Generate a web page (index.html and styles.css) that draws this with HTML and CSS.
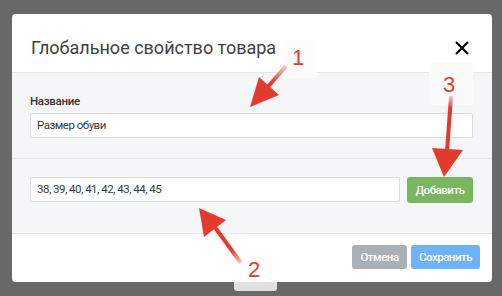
FILE: index.html
```html
<!DOCTYPE html>
<html lang="ru">
<head>
    <meta charset="UTF-8">
    <title>Глобальное свойство товара</title>
    <link rel="stylesheet" href="styles.css">
</head>
<body>

    <div class="modal">
        <div class="modal-header">
            <h2>Глобальное свойство товара</h2>
            <span class="close">
                <svg width="14" height="14" viewBox="0 0 14 14">
                    <path d="M1 1 L13 13 M13 1 L1 13" stroke="#000" stroke-width="2.2"/>
                </svg>
            </span>
        </div>

        <div class="section">
            <label class="label">Название</label>
            <div class="input">Размер обуви</div>
        </div>

        <div class="section section-values">
            <div class="row">
                <div class="input input-grow">38, 39, 40, 41, 42, 43, 44, 45</div>
                <button class="btn btn-green">Добавить</button>
            </div>
        </div>

        <div class="modal-footer">
            <button class="btn btn-gray">Отмена</button>
            <button class="btn btn-blue">Сохранить</button>
        </div>
    </div>

    <div class="tab"></div>

    <!-- annotations on top of the screenshot -->
    <svg class="notes" width="502" height="296" viewBox="0 0 502 296">
        <defs>
            <linearGradient id="tail1" gradientUnits="userSpaceOnUse" x1="286" y1="66" x2="272" y2="82">
                <stop offset="0" stop-color="#f7c9c6"/>
                <stop offset="1" stop-color="#e53b2f"/>
            </linearGradient>
            <linearGradient id="tail2" gradientUnits="userSpaceOnUse" x1="241" y1="263" x2="232" y2="250">
                <stop offset="0" stop-color="#f7c9c6"/>
                <stop offset="1" stop-color="#e53b2f"/>
            </linearGradient>
            <linearGradient id="tail3" gradientUnits="userSpaceOnUse" x1="451" y1="96" x2="450" y2="108">
                <stop offset="0" stop-color="#f7c9c6"/>
                <stop offset="1" stop-color="#e53b2f"/>
            </linearGradient>
        </defs>

        <rect x="283" y="40" width="34" height="38" rx="3" fill="#fcfcfc"/>
        <rect x="429" y="62" width="44" height="43" rx="3" fill="#fbfbfb"/>

        <line x1="286" y1="66" x2="266" y2="89" stroke="url(#tail1)" stroke-width="4"/>
        <polygon points="250,107 259,77 279,95" fill="#e53b2f"/>

        <line x1="241" y1="263" x2="214" y2="226" stroke="url(#tail2)" stroke-width="4"/>
        <polygon points="199,208 226,220 204,237" fill="#e53b2f"/>

        <line x1="451" y1="96" x2="447" y2="152" stroke="url(#tail3)" stroke-width="4"/>
        <polygon points="444,177 432,148 463,150" fill="#e53b2f"/>

        <text x="292" y="65" class="num">1</text>
        <text x="248" y="277" class="num">2</text>
        <text x="443" y="92" class="num">3</text>
    </svg>

</body>
</html>
```

FILE: styles.css
```css
body {
    margin: 0;
    background-color: #686968;
    font-family: Roboto, "Liberation Sans", sans-serif;
    width: 502px;
    height: 296px;
    overflow: hidden;
    position: relative;
}

.modal {
    margin: 14px 10px 0 12px;
    width: 480px;
    background: white;
    border-radius: 4px;
    overflow: hidden;
}

.modal-header {
    display: flex;
    align-items: flex-start;
    justify-content: space-between;
    height: 59px;
    padding: 0 23px 0 19px;
    box-sizing: border-box;
    border-bottom: 1px solid #e3e5e8;
}

.modal-header h2 {
    margin: 23px 0 0 0;
    font-size: 18px;
    line-height: 22px;
    font-weight: normal;
    color: #404040;
}

.close {
    margin-top: 27px;
    display: flex;
}

.section {
    background: #f5f6f8;
    padding: 21px 19px 20px 18px;
    border-bottom: 1px solid #e3e5e8;
}

.section-values {
    padding: 18px 19px 30px 18px;
}

.label {
    display: block;
    font-size: 11.5px;
    letter-spacing: -0.3px;
    line-height: 14px;
    font-weight: 500;
    color: #333;
    margin-bottom: 5px;
}

.input {
    height: 25px;
    box-sizing: border-box;
    background: white;
    border: 1px solid #dadcdf;
    border-radius: 2px;
    padding: 0 6px;
    font-size: 11.5px;
    letter-spacing: -0.5px;
    line-height: 23px;
    color: #3a3a3a;
}

.row {
    display: flex;
    align-items: flex-start;
    gap: 7px;
}

.input-grow {
    flex: 1;
}

.btn {
    border: none;
    border-radius: 3px;
    color: white;
    font-family: Roboto, "Liberation Sans", sans-serif;
    font-size: 11.5px;
    letter-spacing: -0.5px;
    font-weight: 500;
    padding: 0;
    cursor: pointer;
}

.btn-green {
    width: 66px;
    height: 26px;
    background: #7ab660;
}

.modal-footer {
    display: flex;
    justify-content: flex-end;
    gap: 4px;
    padding: 11px 12px 13px 0;
}

.btn-gray {
    width: 55px;
    height: 24px;
    background: #a9b1b6;
}

.btn-blue {
    width: 69px;
    height: 24px;
    background: #6cb3f8;
}

.tab {
    margin-left: 234px;
    width: 43px;
    height: 9px;
    background: #e1e1e1;
    border-radius: 0 0 3px 3px;
}

.notes {
    position: absolute;
    left: 0;
    top: 0;
}

.num {
    font-family: "Liberation Sans", sans-serif;
    font-size: 22px;
    fill: #e53b2f;
}
```
